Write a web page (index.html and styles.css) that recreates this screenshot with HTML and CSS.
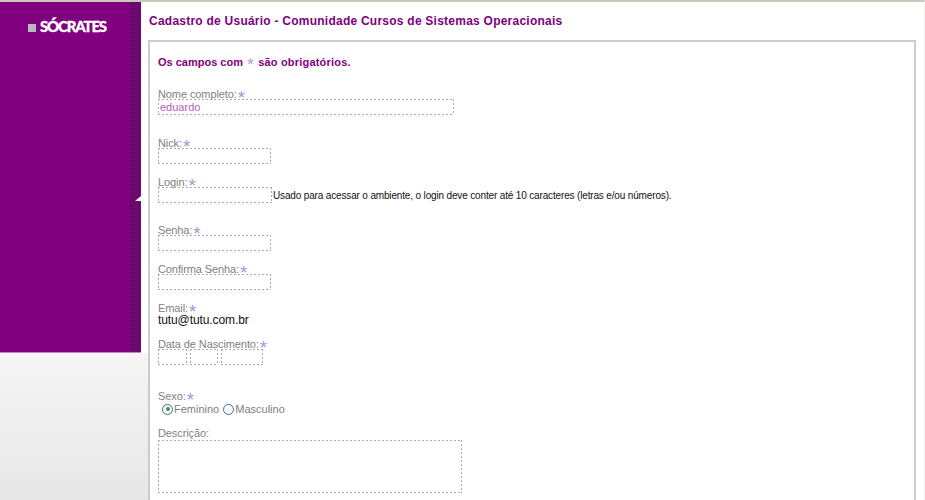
FILE: index.html
```html
<!DOCTYPE html>
<html lang="pt">
<head>
<meta charset="utf-8">
<title>Cadastro de Usuário</title>
<link rel="stylesheet" href="styles.css">
</head>
<body>
<div class="page">
  <aside class="sidebar">
    <div class="panel">
      <div class="logo"><span class="logo-mark"></span><span class="logo-text">SÓCRATES</span></div>
      <div class="stripes"></div>
      <div class="notch"></div>
    </div>
    <div class="under"></div>
  </aside>
  <main class="main">
    <h1 class="title">Cadastro de Usuário - Comunidade Cursos de Sistemas Operacionais</h1>
    <form class="box">
      <p class="notice"><span class="notice-a">Os campos com</span> <span class="notice-star">*</span> <span class="notice-b">são obrigatórios.</span></p>
      <div class="field f-nome">
        <div class="label"><span>Nome completo:</span><span class="star">*</span></div>
        <div class="input wide">eduardo</div>
      </div>
      <div class="field f-nick">
        <div class="label"><span>Nick:</span><span class="star">*</span></div>
        <div class="input"></div>
      </div>
      <div class="field f-login">
        <div class="label"><span>Login:</span><span class="star">*</span></div>
        <div class="row"><div class="input login"></div><span class="hint">Usado para acessar o ambiente, o login deve conter até 10 caracteres (letras e/ou números).</span></div>
      </div>
      <div class="field f-senha">
        <div class="label"><span>Senha:</span><span class="star">*</span></div>
        <div class="input"></div>
      </div>
      <div class="field f-conf">
        <div class="label"><span>Confirma Senha:</span><span class="star">*</span></div>
        <div class="input"></div>
      </div>
      <div class="field f-email">
        <div class="label"><span>Email:</span><span class="star">*</span></div>
        <div class="value">tutu@tutu.com.br</div>
      </div>
      <div class="field f-data">
        <div class="label"><span>Data de Nascimento:</span><span class="star">*</span></div>
        <div class="row date"><div class="input dd"></div><div class="input mm"></div><div class="input yy"></div></div>
      </div>
      <div class="field f-sexo">
        <div class="label"><span>Sexo:</span><span class="star">*</span></div>
        <div class="radios">
          <span class="radio on"></span><span class="radio-text">Feminino</span>
          <span class="radio"></span><span class="radio-text">Masculino</span>
        </div>
      </div>
      <div class="field f-desc">
        <div class="label"><span>Descrição:</span></div>
        <div class="input area"></div>
      </div>
    </form>
  </main>
</div>
</body>
</html>
```
FILE: styles.css
```css
* { box-sizing: border-box; }
html, body { margin: 0; padding: 0; height: 500px; overflow: hidden; background: #fff; }
body { font-family: "Liberation Sans", Arial, sans-serif; }
.page { display: flex; height: 500px; border-top: 2px solid #c9c9bd; border-right: 1px solid #f1f1ec; }
.sidebar { width: 148px; flex: none; height: 498px; display: flex; flex-direction: column; }
.panel { position: relative; width: 141px; height: 351px; flex: none; background: #800080; border-bottom: 1px solid #b98abb; }
.under { flex: 1; background: linear-gradient(#f5f5f5, #e7e7e7); }
.stripes { position: absolute; right: 1px; top: 0; bottom: 0; width: 10px; background: repeating-linear-gradient(#55105c 0 1px, #800080 1px 2px); }
.notch { position: absolute; right: 0; top: 194px; width: 0; height: 0; border-bottom: 5px solid #fff; border-left: 6px solid transparent; }
.logo { display: flex; align-items: center; padding: 16px 0 0 28px; height: 32px; }
.logo-mark { width: 8px; height: 8px; background: #b9b9b9; margin-top: 3px; flex: none; }
.logo-text { margin-left: 4px; font-family: "Lato", sans-serif; font-weight: 900; font-size: 15px; color: #fff; letter-spacing: -1.2px; white-space: nowrap; -webkit-text-stroke: 0.3px #fff; }
.main { flex: 1; min-width: 0; }
.title { margin: 12px 0 0 1px; font-size: 12px; line-height: 14px; font-weight: bold; color: #800080; letter-spacing: 0.24px; white-space: nowrap; }
.box { margin-top: 12px; width: 768px; height: 480px; border: 2px solid #ccc; padding: 14px 8px 0; }
.notice { margin: 0; height: 13px; font-size: 11px; line-height: 13px; font-weight: bold; color: #800080; white-space: nowrap; }
.notice-b { letter-spacing: 0.2px; }
.notice-star { color: #b9a0c9; font-weight: normal; font-size: 18px; line-height: 0; vertical-align: -5px; margin: 0 1px; }
.label { display: flex; align-items: flex-start; font-size: 11px; line-height: 12px; letter-spacing: -0.1px; color: #808080; height: 11px; white-space: nowrap; }
.star { color: #b88fd0; font-size: 19px; letter-spacing: 0; line-height: 11px; margin: 3.5px 0 0 1px; }
.input { width: 113px; height: 16px; padding-left: 1px; font-size: 11px; line-height: 14px; color: #b45cc0; background:
  repeating-linear-gradient(90deg, #aaa 0 2px, transparent 2px 4px) top / 100% 1px no-repeat,
  repeating-linear-gradient(90deg, #aaa 0 2px, transparent 2px 4px) bottom / 100% 1px no-repeat,
  repeating-linear-gradient(#aaa 0 2px, transparent 2px 4px) left / 1px 100% no-repeat,
  repeating-linear-gradient(#aaa 0 2px, transparent 2px 4px) right / 1px 100% no-repeat; }
.wide { width: 296px; padding: 1px 0 0 2px; }
.login { width: 114px; }
.row { display: flex; align-items: center; }
.hint { font-size: 10px; color: #111; margin-left: 1px; letter-spacing: -0.154px; white-space: nowrap; }
.value { font-size: 12px; line-height: 14px; color: #111; letter-spacing: -0.1px; }
.date { gap: 3px; }
.dd { width: 29px; }
.mm { width: 28px; }
.yy { width: 42px; }
.area { width: 304px; height: 53px; margin-top: 2px; }
.radios { display: flex; align-items: center; font-size: 11px; color: #808080; padding-left: 4px; height: 14px; margin-top: 1px; }
.radio { width: 11px; height: 11px; border-radius: 50%; border: 1px solid #3a6f9a; background: #fff; flex: none; margin-right: 1px; position: relative; }
.radio.on::after { content: ""; position: absolute; left: 2.5px; top: 2.5px; width: 4px; height: 4px; border-radius: 50%; background: #2f9a3a; }
.radio-text { margin-right: 4px; }
.f-nome { margin-top: 19px; }
.f-nick { margin-top: 22px; }
.f-login { margin-top: 12px; }
.f-senha { margin-top: 21px; }
.f-conf { margin-top: 12px; }
.f-email { margin-top: 12px; }
.f-data { margin-top: 11px; }
.f-sexo { margin-top: 25px; }
.f-desc { margin-top: 11px; }
```
